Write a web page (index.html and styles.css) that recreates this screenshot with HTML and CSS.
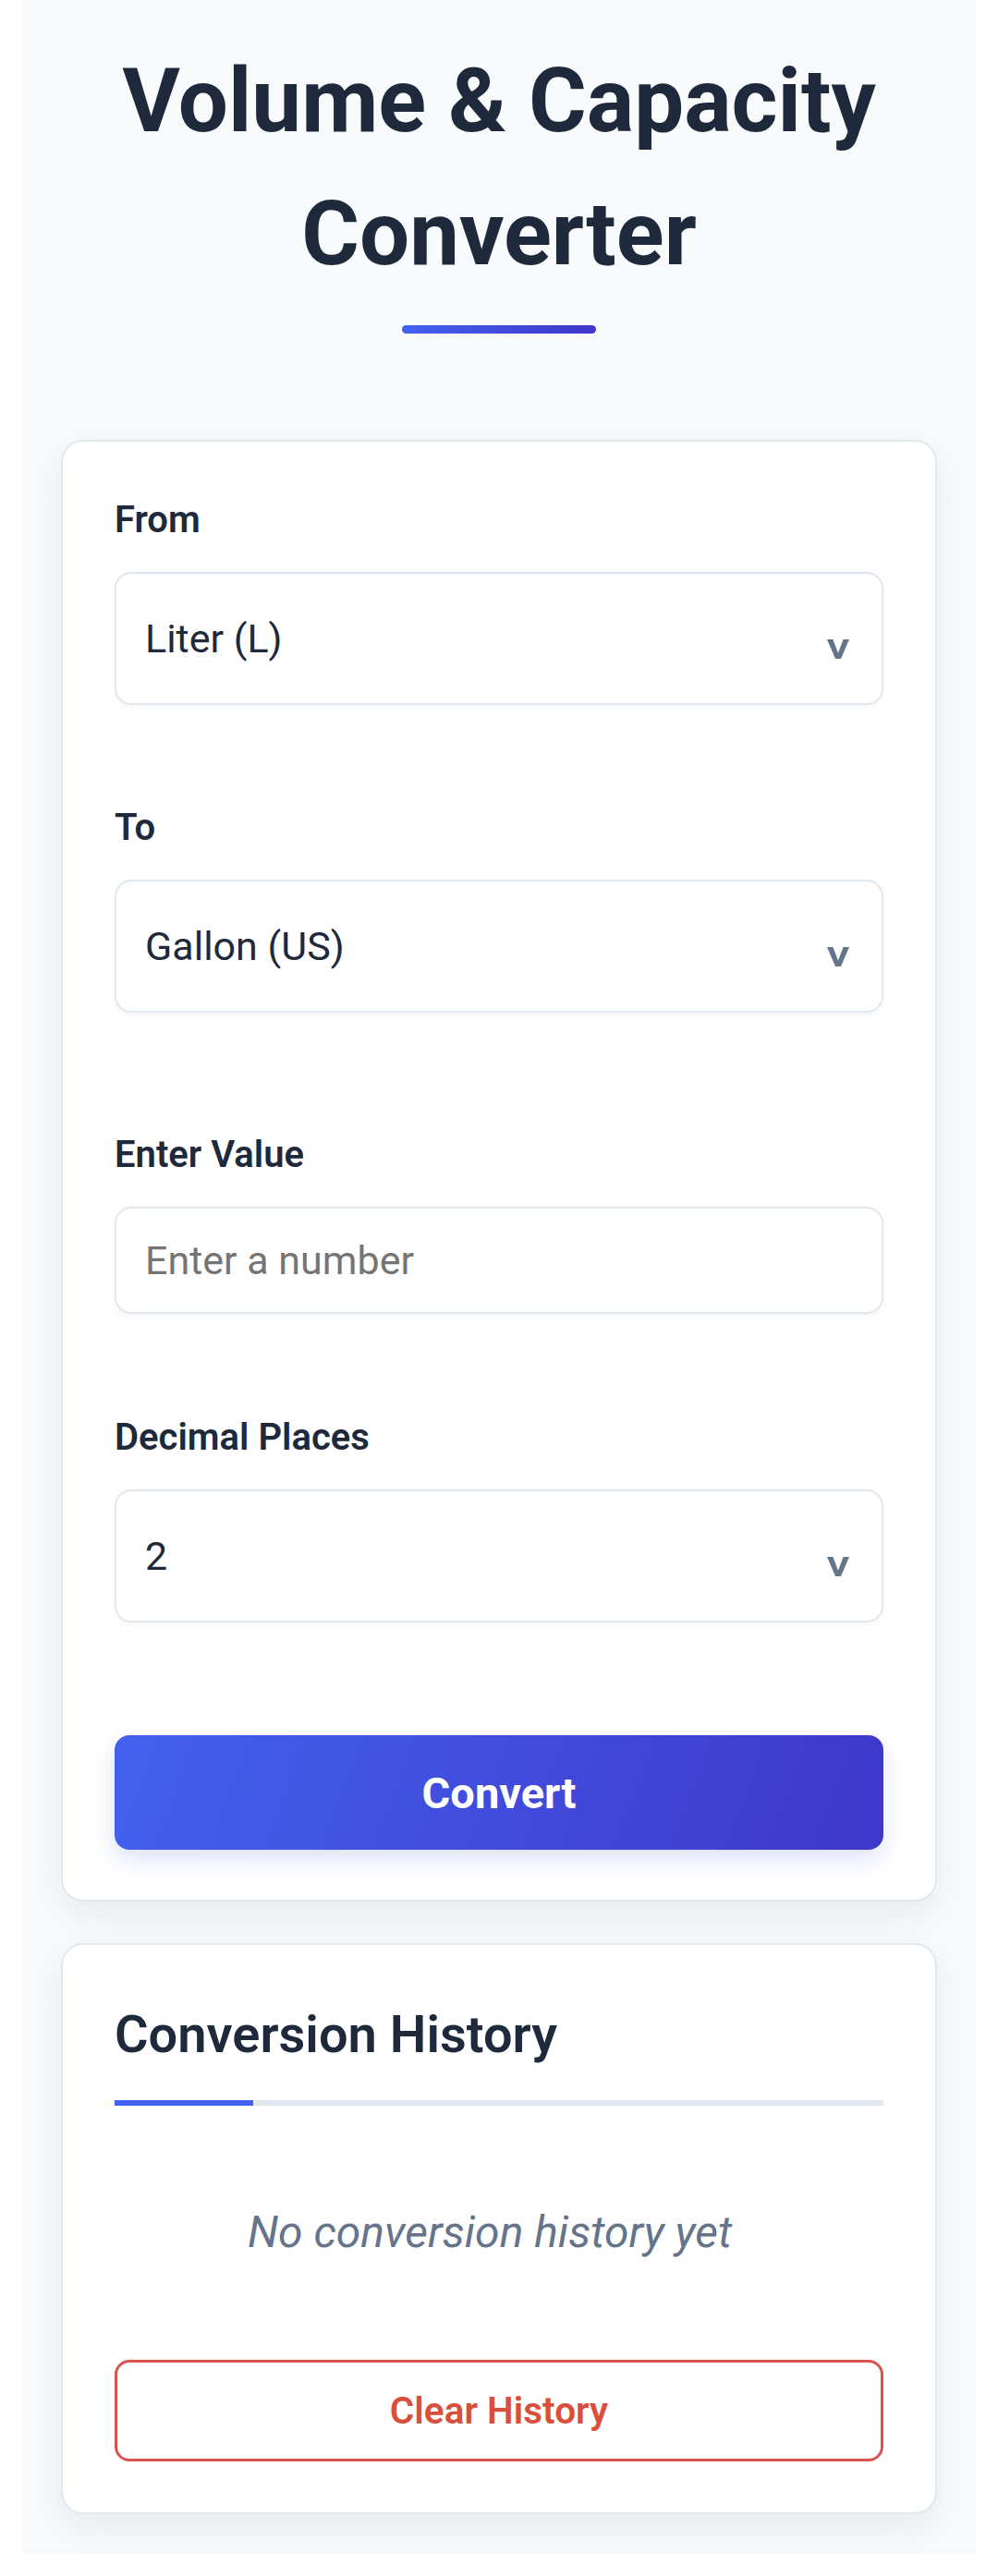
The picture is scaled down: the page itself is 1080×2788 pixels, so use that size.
FILE: index.html
```html
<!DOCTYPE html>
<html lang="en">
<head>
<meta charset="utf-8">
<title>Volume &amp; Capacity Converter</title>
<link rel="stylesheet" href="styles.css">
</head>
<body>
<main class="page">
  <h1 class="title">Volume &amp; Capacity Converter</h1>
  <div class="title-bar"></div>

  <section class="card converter">
    <div class="field field-from">
      <label class="label" for="from">From</label>
      <div class="select-wrap">
        <select id="from" class="control select"><option>Liter (L)</option></select>
        <svg class="chevron" width="24" height="21" viewBox="0 0 24 21"><polygon points="0,0 6.4,0 12,14.8 17.6,0 24,0 15,21 9,21"/></svg>
      </div>
    </div>
    <div class="field field-to">
      <label class="label" for="to">To</label>
      <div class="select-wrap">
        <select id="to" class="control select"><option>Gallon (US)</option></select>
        <svg class="chevron" width="24" height="21" viewBox="0 0 24 21"><polygon points="0,0 6.4,0 12,14.8 17.6,0 24,0 15,21 9,21"/></svg>
      </div>
    </div>
    <div class="field field-value">
      <label class="label" for="value">Enter Value</label>
      <input id="value" class="control input" type="text" placeholder="Enter a number">
    </div>
    <div class="field field-decimals">
      <label class="label" for="dec">Decimal Places</label>
      <div class="select-wrap">
        <select id="dec" class="control select"><option>2</option></select>
        <svg class="chevron" width="24" height="21" viewBox="0 0 24 21"><polygon points="0,0 6.4,0 12,14.8 17.6,0 24,0 15,21 9,21"/></svg>
      </div>
    </div>
    <button class="btn-convert" type="button">Convert</button>
  </section>

  <section class="card history">
    <h2 class="history-title">Conversion History</h2>
    <div class="history-rule"><div class="history-rule-accent"></div></div>
    <p class="history-empty">No conversion history yet</p>
    <button class="btn-clear" type="button">Clear History</button>
  </section>
</main>
</body>
</html>
```

FILE: styles.css
```css
* { box-sizing: border-box; }

html, body {
  margin: 0;
  padding: 0;
  background: #ffffff;
}

body {
  padding: 0 24px;
  font-family: Roboto, "Liberation Sans", Arial, sans-serif;
  color: #1e293b;
}

.page {
  background: #f8fafc;
  padding: 37px 42px 43px;
}

.title {
  margin: 0;
  font-size: 96px;
  line-height: 144px;
  font-weight: 700;
  text-align: center;
  color: #1e293b;
}

.title-bar {
  width: 210px;
  height: 9px;
  margin: 27px auto 0;
  border-radius: 5px;
  background: linear-gradient(90deg, #4361ee, #3f37c9);
}

.card {
  background: #ffffff;
  border: 2px solid #e2e8f0;
  border-radius: 24px;
  box-shadow: 0 14px 40px rgba(15, 23, 42, 0.07);
}

.converter {
  margin-top: 115px;
  padding: 61px 56px 54px;
}

.field { display: flex; flex-direction: column; }
.field-from { margin-bottom: 109px; }
.field-to { margin-bottom: 130px; }
.field-value { margin-bottom: 110px; }
.field-decimals { margin-bottom: 122px; }

.label {
  font-size: 40px;
  line-height: 48px;
  font-weight: 600;
  color: #1e293b;
  margin-bottom: 32px;
}

.select-wrap { position: relative; }

.control {
  display: block;
  width: 100%;
  margin: 0;
  border: 2px solid #e2e8f0;
  border-radius: 18px;
  background: #ffffff;
  font-family: Roboto, "Liberation Sans", Arial, sans-serif;
  font-size: 43px;
  color: #1e293b;
  padding: 0 31px;
  box-shadow: 0 3px 6px rgba(15, 23, 42, 0.04);
  outline: none;
}

.select {
  height: 144px;
  appearance: none;
  -webkit-appearance: none;
}

.input { height: 116px; }
.input::placeholder { color: #757575; opacity: 1; }

.chevron {
  position: absolute;
  right: 37px;
  top: 73px;
  fill: #64748b;
}

.btn-convert {
  display: block;
  width: 100%;
  height: 124px;
  border: none;
  border-radius: 16px;
  background: linear-gradient(110deg, #4361ee 0%, #3f37c9 100%);
  color: #ffffff;
  font-family: Roboto, "Liberation Sans", Arial, sans-serif;
  font-size: 47px;
  font-weight: 700;
  box-shadow: 0 10px 24px rgba(67, 97, 238, 0.18);
}

.history {
  margin-top: 45px;
  padding: 64px 56px 55px;
}

.history-title {
  margin: 0 0 38px;
  font-size: 56px;
  line-height: 66px;
  font-weight: 600;
  color: #1e293b;
}

.history-rule {
  height: 6px;
  background: #e2e8f0;
}

.history-rule-accent {
  width: 150px;
  height: 6px;
  background: #4361ee;
}

.history-empty {
  margin: 110px 0 112px;
  padding-right: 20px;
  font-size: 48px;
  line-height: 53px;
  font-style: italic;
  text-align: center;
  color: #64748b;
}

.btn-clear {
  display: block;
  width: 100%;
  height: 110px;
  border: 3px solid #d9534f;
  border-radius: 16px;
  background: #ffffff;
  color: #d94f3d;
  font-family: Roboto, "Liberation Sans", Arial, sans-serif;
  font-size: 40.5px;
  font-weight: 600;
}
```
